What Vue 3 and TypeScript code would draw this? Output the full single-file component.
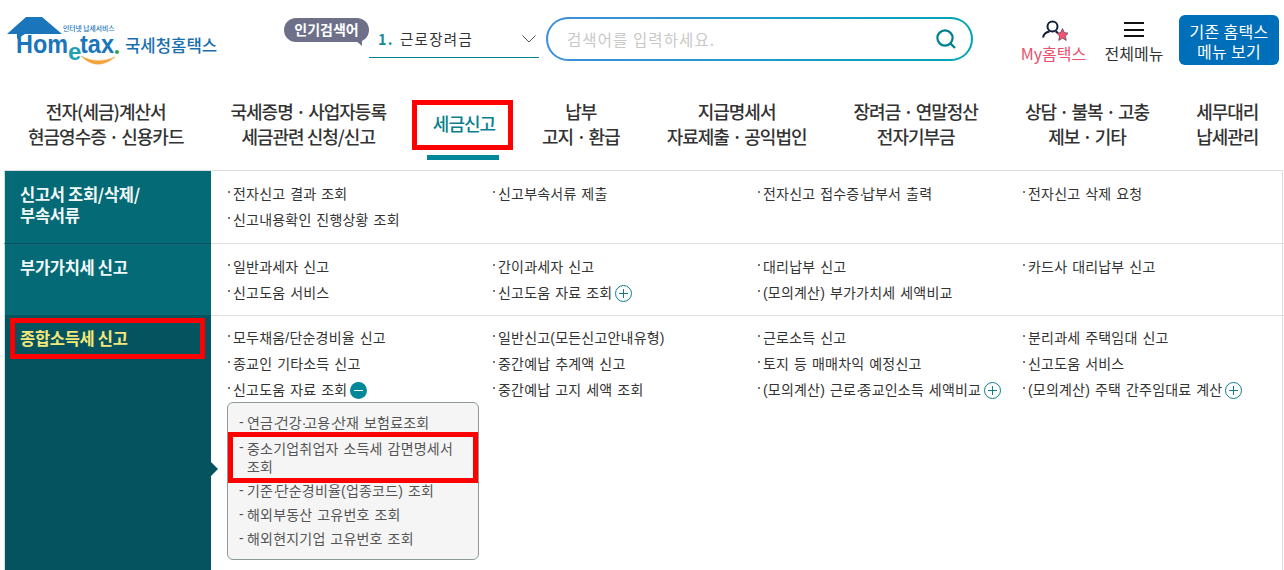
<template>
  <div class="page">
    <header class="top">
      <a class="logo">
        <svg class="logo-mark" width="118" height="55" viewBox="0 0 118 55">
          <path d="M0 19 L19 2 H35 L55 19 H18 L10 24 V19 Z" fill="#1a75bb" />
          <path d="M74 41 Q90 57 108 42 Q90 50 74 41 Z" fill="#f2a33a" stroke="#f2a33a" stroke-width=".5" />
          <circle cx="110" cy="37" r="2" fill="#2fa35a" />
          <text x="9" y="38" class="logo-word" textLength="52" lengthAdjust="spacingAndGlyphs">Hom</text>
          <text x="61" y="45" class="logo-e">e</text>
          <text x="73" y="38" class="logo-word" textLength="34" lengthAdjust="spacingAndGlyphs">tax</text>
          <text x="56" y="16" class="logo-small">인터넷 납세서비스</text>
        </svg>
        <span class="logo-name">국세청홈택스</span>
      </a>
      <div class="popular">
        <span class="bubble">인기검색어</span>
        <div class="select">
          <b>1.</b><span>근로장려금</span>
          <svg class="chev" width="14" height="8" viewBox="0 0 14 8"><path d="M.5 .5 L7 7 L13.5 .5" fill="none" stroke="#555" stroke-width="1" /></svg>
        </div>
      </div>
      <div class="search">
        <span class="placeholder">검색어를 입력하세요.</span>
        <svg width="22" height="22" viewBox="0 0 22 22">
          <circle cx="10" cy="10" r="7.6" fill="none" stroke="#00808f" stroke-width="2.2" />
          <path d="M15.5 15.5 L20 20" stroke="#00808f" stroke-width="2.4" />
        </svg>
      </div>
      <a class="util my">
        <svg width="28" height="24" viewBox="0 0 28 24">
          <circle cx="12.5" cy="7.5" r="5" fill="none" stroke="#14203a" stroke-width="2" />
          <path d="M3 18.5 Q4 13.5 9.5 12.5 M15.5 12.5 Q17 13 18 14" fill="none" stroke="#14203a" stroke-width="2" />
          <path d="M22.5 9.5 L24.4 13.6 L28.5 14.1 L25.5 17 L26.3 21.5 L22.5 19.3 L18.7 21.5 L19.5 17 L16.5 14.1 L20.6 13.6 Z" fill="#f0566e" stroke="#14203a" stroke-width=".5" />
        </svg>
        <span>My홈택스</span>
      </a>
      <a class="util menu">
        <span class="burger"><i></i><i></i><i></i></span>
        <span>전체메뉴</span>
      </a>
      <a class="old-btn">기존 홈택스<br />메뉴 보기</a>
    </header>

    <nav class="gnb">
      <a v-for="item in gnb" :key="item.lines[0]" class="gnb-item" :class="{ on: item.on }">
        <span v-for="line in item.lines" :key="line">{{ line }}</span>
      </a>
    </nav>

    <section class="panel">
      <div v-for="row in rows" :key="row.title" class="row" :class="{ active: row.active }">
        <div class="side">
          <span class="side-title">
            <template v-for="(t, i) in row.title.split('|')" :key="t"><br v-if="i" />{{ t }}</template>
          </span>
        </div>
        <div class="cells">
          <div v-for="cell in row.cells" :key="cell.text" class="cell">
            <span><template v-for="(p, i) in cell.text.split('·')" :key="p"><span v-if="i" class="dot">·</span>{{ p }}</template></span>
            <span v-if="cell.icon === 'plus'" class="plus"></span>
            <span v-if="cell.icon === 'minus'" class="minus"></span>
            <div v-if="cell.sub" class="sub">
              <div v-for="s in cell.sub" :key="s.text" class="sub-item" :class="{ mark: s.mark }">
                <template v-for="(p, i) in s.text.split('·')" :key="p"><span v-if="i" class="dot">·</span>{{ p }}</template>
              </div>
            </div>
          </div>
        </div>
      </div>
    </section>
  </div>
</template>

<script setup lang="ts">
interface SubItem {
  text: string;
  mark?: boolean;
}

interface Cell {
  text: string;
  icon?: 'plus' | 'minus';
  sub?: SubItem[];
}

const gnb = [
  { lines: ['전자(세금)계산서', '현금영수증 · 신용카드'] },
  { lines: ['국세증명 · 사업자등록', '세금관련 신청/신고'] },
  { lines: ['세금신고'], on: true },
  { lines: ['납부', '고지 · 환급'] },
  { lines: ['지급명세서', '자료제출 · 공익법인'] },
  { lines: ['장려금 · 연말정산', '전자기부금'] },
  { lines: ['상담 · 불복 · 고충', '제보 · 기타'] },
  { lines: ['세무대리', '납세관리'] },
];

const rows: { title: string; active?: boolean; cells: Cell[] }[] = [
  {
    title: '신고서 조회/삭제/|부속서류',
    cells: [
      { text: '전자신고 결과 조회' },
      { text: '신고부속서류 제출' },
      { text: '전자신고 접수증·납부서 출력' },
      { text: '전자신고 삭제 요청' },
      { text: '신고내용확인 진행상황 조회' },
    ],
  },
  {
    title: '부가가치세 신고',
    cells: [
      { text: '일반과세자 신고' },
      { text: '간이과세자 신고' },
      { text: '대리납부 신고' },
      { text: '카드사 대리납부 신고' },
      { text: '신고도움 서비스' },
      { text: '신고도움 자료 조회', icon: 'plus' },
      { text: '(모의계산) 부가가치세 세액비교' },
    ],
  },
  {
    title: '종합소득세 신고',
    active: true,
    cells: [
      { text: '모두채움/단순경비율 신고' },
      { text: '일반신고(모든신고안내유형)' },
      { text: '근로소득 신고' },
      { text: '분리과세 주택임대 신고' },
      { text: '종교인 기타소득 신고' },
      { text: '중간예납 추계액 신고' },
      { text: '토지 등 매매차익 예정신고' },
      { text: '신고도움 서비스' },
      {
        text: '신고도움 자료 조회',
        icon: 'minus',
        sub: [
          { text: '연금·건강·고용·산재 보험료조회' },
          { text: '중소기업취업자 소득세 감면명세서 조회', mark: true },
          { text: '기준·단순경비율(업종코드) 조회' },
          { text: '해외부동산 고유번호 조회' },
          { text: '해외현지기업 고유번호 조회' },
        ],
      },
      { text: '중간예납 고지 세액 조회' },
      { text: '(모의계산) 근로·종교인소득 세액비교', icon: 'plus' },
      { text: '(모의계산) 주택 간주임대료 계산', icon: 'plus' },
    ],
  },
];
</script>

<style>
html,
body {
  margin: 0;
  background: #fff;
  overflow: hidden;
}
</style>

<style scoped>
.page {
  width: 1284px;
  height: 570px;
  overflow: hidden;
  font-family: "Noto Sans CJK KR", "Noto Sans", sans-serif;
  color: #333;
}

.top {
  display: flex;
  align-items: flex-start;
  height: 100px;
  box-sizing: border-box;
  padding: 15px 5px 0 7px;
}

.logo {
  display: flex;
  align-items: flex-start;
  flex: none;
  width: 277px;
}

.logo-mark {
  flex: none;
}

.logo-word {
  font: 700 25px "Liberation Sans", sans-serif;
  fill: #1a75bb;
}

.logo-e {
  font: 700 24px "Liberation Sans", sans-serif;
  fill: #1ea0b5;
}

.logo-small {
  font-size: 6.8px;
  font-weight: 500;
  fill: #1a75bb;
}

.logo-name {
  margin-top: 20px;
  font-size: 16.7px;
  font-weight: 500;
  line-height: 20px;
  color: #1a6fae;
  white-space: nowrap;
}

.popular {
  display: flex;
  align-items: flex-start;
  flex: none;
  width: 262px;
}

.bubble {
  position: relative;
  flex: none;
  width: 85px;
  height: 24px;
  margin-top: 3px;
  border-radius: 12px;
  background: #6d7088;
  color: #fff;
  font-size: 14px;
  font-weight: 700;
  line-height: 23px;
  text-align: center;
  white-space: nowrap;
}

.bubble::after {
  content: "";
  position: absolute;
  right: 7px;
  bottom: -4px;
  border-top: 6px solid #6d7088;
  border-left: 7px solid transparent;
}

.select {
  display: flex;
  align-items: center;
  flex: none;
  width: 170px;
  height: 43px;
  box-sizing: border-box;
  padding: 4px 3px 0 9px;
  border-bottom: 1px solid #00808f;
  font-size: 14.5px;
  letter-spacing: 1.3px;
  white-space: nowrap;
}

.select b {
  margin-right: 6px;
  color: #1a8a9b;
  font-weight: 700;
}

.chev {
  margin: 2px 0 0 auto;
}

.search {
  display: flex;
  align-items: center;
  justify-content: space-between;
  flex: none;
  width: 427px;
  height: 44px;
  box-sizing: border-box;
  margin-top: 2px;
  padding: 0 14px 0 19px;
  border: 2px solid transparent;
  border-radius: 22px;
  background: linear-gradient(#fff, #fff) padding-box, linear-gradient(90deg, #3f8fdc, #00a5b5) border-box;
}

.placeholder {
  color: #c8c8c8;
  font-size: 15.5px;
  letter-spacing: 1.1px;
}

.util {
  display: flex;
  flex-direction: column;
  align-items: center;
  justify-content: space-between;
  flex: none;
  height: 49px;
  box-sizing: border-box;
  font-size: 16px;
  line-height: 22px;
  white-space: nowrap;
}

.my {
  width: 67px;
  margin-left: 47px;
  padding-top: 4px;
  color: #e8506e;
}

.my svg {
  margin-bottom: -6px;
}

.menu {
  width: 60px;
  margin-left: 17px;
  padding-top: 7px;
}

.burger {
  display: flex;
  flex-direction: column;
  gap: 4.5px;
  width: 20px;
}

.burger i {
  height: 2px;
  background: #111;
}

.old-btn {
  flex: none;
  width: 100px;
  height: 50px;
  margin-left: 15px;
  padding-top: 6px;
  box-sizing: border-box;
  border-radius: 6px;
  background: #006fb9;
  color: #fff;
  font-size: 16px;
  letter-spacing: 0.3px;
  line-height: 20px;
  text-align: center;
  white-space: nowrap;
}

.gnb {
  display: flex;
  gap: 47px;
  height: 70px;
  padding-left: 28px;
  box-sizing: border-box;
}

.gnb-item {
  position: relative;
  display: flex;
  flex-direction: column;
  align-items: center;
  justify-content: center;
  height: 50px;
  padding-bottom: 3px;
  box-sizing: border-box;
  font-size: 18px;
  font-weight: 500;
  letter-spacing: -1px;
  line-height: 25px;
  white-space: nowrap;
}

.gnb-item.on {
  width: 101px;
  margin: 0 -18px 0 -21px;
  padding: 0 0 3px 3px;
  border: 5px solid #f00;
  color: #0a7f8e;
}

.gnb-item.on::after {
  content: "";
  position: absolute;
  left: 10px;
  right: 9px;
  bottom: -15px;
  height: 5px;
  background: #00889a;
}

.panel {
  display: grid;
  grid-template-rows: 72px 72px 1fr;
  box-sizing: border-box;
  width: 1279px;
  height: 400px;
  margin-left: 4px;
  border-top: 1px solid #ddd;
  border-right: 1px solid #ddd;
}

.row {
  display: flex;
  min-height: 0;
}

.row:first-child {
  height: 73px;
}

.row:nth-child(2) {
  margin-top: 1px;
  height: 72px;
}

.side {
  flex: none;
  width: 207px;
  box-sizing: border-box;
  padding: 12.5px 15px;
  background: #036a76;
  border-left: 1px solid #cfe0e2;
  border-bottom: 1px solid #05505c;
  color: #f2f8f8;
  font-size: 16.5px;
  font-weight: 700;
  letter-spacing: -0.3px;
  line-height: 21px;
}

.active .side {
  position: relative;
  padding-top: 3px;
  padding-left: 5px;
  background: #05535e;
  border-bottom: 0;
  color: #f5e77a;
}

.active .side::after {
  content: "";
  position: absolute;
  top: 147px;
  right: -7px;
  border-left: 7px solid #05535e;
  border-top: 7px solid transparent;
  border-bottom: 7px solid transparent;
}

.active .side-title {
  display: block;
  width: 195px;
  height: 41px;
  box-sizing: border-box;
  padding-left: 5px;
  border: 5px solid #f00;
  line-height: 31px;
}

.cells {
  flex: 1;
  display: grid;
  grid-template-columns: repeat(4, 265px);
  grid-auto-rows: 26px;
  align-content: start;
  box-sizing: border-box;
  padding: 10px 0 0 17px;
  border-bottom: 1px solid #ddd;
}

.active .cells {
  border-bottom: 0;
}

.cell {
  position: relative;
  display: flex;
  align-items: center;
  gap: 3px;
  padding-left: 5px;
  font-family: "Liberation Sans", "Noto Sans CJK KR", sans-serif;
  font-size: 14px;
  letter-spacing: 0.2px;
  word-spacing: 0.8px;
  line-height: 26px;
  white-space: nowrap;
}

.cell::before {
  content: "";
  position: absolute;
  left: 0;
  top: 10px;
  width: 2px;
  height: 2px;
  background: #777;
}

.dot {
  letter-spacing: -2.2px;
}

.plus,
.minus {
  position: relative;
  flex: none;
  width: 17px;
  height: 17px;
  box-sizing: border-box;
  border-radius: 50%;
}

.plus {
  border: 1px solid #0f7d8d;
}

.plus::before,
.plus::after {
  content: "";
  position: absolute;
  background: #0f7d8d;
}

.plus::before {
  left: 3px;
  right: 3px;
  top: 7px;
  height: 1px;
}

.plus::after {
  top: 3px;
  bottom: 3px;
  left: 7px;
  width: 1px;
}

.minus {
  background: #00889a;
}

.minus::after {
  content: "";
  position: absolute;
  left: 4px;
  right: 4px;
  top: 8px;
  height: 1.5px;
  background: #fff;
}

.sub {
  position: absolute;
  top: 25px;
  left: -1px;
  z-index: 1;
  width: 252px;
  height: 158px;
  box-sizing: border-box;
  padding-top: 8px;
  border: 1px solid #8c9a9c;
  border-radius: 6px;
  background: #f5f5f5;
  white-space: normal;
}

.sub-item {
  position: relative;
  padding: 0 14px 0 19px;
  color: #555;
  line-height: 24px;
}

.sub-item::before {
  content: "-";
  position: absolute;
  left: 11px;
  top: -1px;
}

.sub-item.mark {
  height: 45px;
  box-sizing: border-box;
  margin: 0 3px -1px;
  padding: 5px 0 0 16px;
  outline: 5px solid #f00;
  outline-offset: -2px;
  line-height: 18px;
  word-break: keep-all;
}

.sub-item.mark::before {
  left: 8px;
  top: 3px;
}
</style>
